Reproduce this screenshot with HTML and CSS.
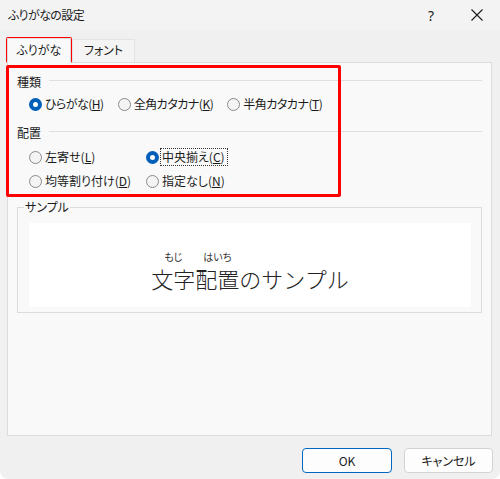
FILE: index.html
```html
<!DOCTYPE html>
<html lang="ja">
<head>
<meta charset="utf-8">
<title>ふりがなの設定</title>
<link rel="stylesheet" href="styles.css">
</head>
<body>
<div class="window">
  <div class="titlebar">
    <span class="title">ふりがなの設定</span>
    <span class="tbtn help">?</span>
    <span class="tbtn close">
      <svg width="12" height="12" viewBox="0 0 12 12"><path d="M0.5 0.5 L11.5 11.5 M11.5 0.5 L0.5 11.5" stroke="#1b1b1b" stroke-width="1.1" fill="none"/></svg>
    </span>
  </div>

  <div class="tabs">
    <div class="tab active">ふりがな</div>
    <div class="tab">フォント</div>
  </div>

  <div class="panel">
    <div class="ghead">種類</div>
    <div class="row row1">
      <label class="opt"><span class="radio on"></span><span>ひらがな(<u>H</u>)</span></label>
      <label class="opt"><span class="radio"></span><span>全角カタカナ(<u>K</u>)</span></label>
      <label class="opt"><span class="radio"></span><span>半角カタカナ(<u>T</u>)</span></label>
    </div>

    <div class="ghead g2">配置</div>
    <div class="grid">
      <label class="opt"><span class="radio"></span><span>左寄せ(<u>L</u>)</span></label>
      <label class="opt"><span class="radio on"></span><span class="focus">中央揃え(<u>C</u>)</span></label>
      <label class="opt"><span class="radio"></span><span>均等割り付け(<u>D</u>)</span></label>
      <label class="opt"><span class="radio"></span><span>指定なし(<u>N</u>)</span></label>
    </div>

    <fieldset class="samplebox">
      <legend>サンプル</legend>
      <div class="preview">
        <div class="sample"><ruby>文字<rt>もじ</rt></ruby><ruby>配置<rt>はいち</rt></ruby>のサンプル</div>
      </div>
    </fieldset>
  </div>

  <div class="footer">
    <button class="btn ok">OK</button>
    <button class="btn">キャンセル</button>
  </div>

  <div class="mark mark-tab"></div>
  <div class="mark mark-sec"></div>
</div>
</body>
</html>
```

FILE: styles.css
```css
html {
  margin: 0;
  background: #ffffff;
}
body {
  margin: 0;
  font-family: "Noto Sans CJK JP", "Noto Sans", sans-serif;
  font-size: 12px;
  color: #1b1b1b;
}
.window {
  position: relative;
  width: 500px;
  height: 479px;
  background: #f0f0f0;
  border-radius: 0 0 8px 8px;
  overflow: hidden;
  font-feature-settings: "palt";
}
.titlebar {
  height: 30px;
  display: flex;
  align-items: center;
  padding-left: 8px;
  background: #f3f3f3;
}
.title {
  line-height: 16px;
  margin-top: -1px;
  letter-spacing: -0.6px;
}
.tbtn {
  width: 46px;
  height: 30px;
  display: flex;
  align-items: center;
  justify-content: center;
}
.help {
  margin-left: auto;
  font-size: 14px;
  font-family: "Noto Sans", sans-serif;
}
.close svg {
  display: block;
}
.tabs {
  height: 32px;
  display: flex;
  align-items: flex-end;
  padding-left: 7px;
}
.tab {
  box-sizing: border-box;
  height: 23px;
  line-height: 20px;
  text-align: center;
  background: #f4f4f4;
  border: 1px solid #e3e3e3;
  border-bottom: none;
  width: 63px;
  margin-left: 1px;
}
.tab.active {
  width: 64px;
  height: 25px;
  margin-left: 0;
  margin-bottom: -1px;
  line-height: 22px;
  background: #f9f9f9;
  border-color: #dcdcdc;
  position: relative;
  z-index: 1;
}
.panel {
  box-sizing: border-box;
  margin-left: 7px;
  width: 485px;
  height: 374px;
  background: #f9f9f9;
  border: 1px solid #dcdcdc;
  padding: 11px 9px 0 9px;
}
.ghead {
  display: flex;
  height: 16px;
  line-height: 16px;
}
.ghead::after {
  content: "";
  flex: 1;
  height: 1px;
  background: #dfdfdf;
  margin: 6px 0 0 8px;
}
.g2 {
  margin-top: 9px;
}
.row {
  display: flex;
  height: 24px;
  align-items: center;
  padding-left: 12px;
  margin-top: 2px;
}
.row1 .opt {
  margin-right: 14px;
}
.row1 .opt span:last-child {
  letter-spacing: -0.5px;
}
.grid {
  display: grid;
  grid-template-columns: 117px auto;
  grid-auto-rows: 24px;
  padding-left: 12px;
  margin-top: 4px;
  align-items: center;
}
.opt {
  display: flex;
  align-items: center;
  line-height: 16px;
}
.radio {
  box-sizing: border-box;
  width: 13px;
  height: 13px;
  border-radius: 50%;
  border: 1px solid #8a8a8a;
  background: #f4f4f4;
  margin-right: 3px;
  flex: none;
}
.radio.on {
  border: 4px solid #005fb8;
  background: #ffffff;
}
.focus {
  outline: 1px dotted #333333;
  padding: 0 2px 0 1px;
  margin-left: -1px;
}
.samplebox {
  margin: 7px 0 0 0;
  min-width: 0;
  border: 1px solid #dcdcdc;
  padding: 0 10px 5px 11px;
}
.samplebox legend {
  margin-left: -5px;
  padding: 0 1px;
  line-height: 14px;
}
.preview {
  margin-top: 9px;
  height: 84px;
  background: #ffffff;
  box-sizing: border-box;
  padding-top: 34px;
  text-align: center;
}
.sample {
  font-size: 22px;
  line-height: 22px;
  font-weight: 300;
  font-feature-settings: normal;
  color: #222222;
}
.sample ruby {
  ruby-align: center;
}
.sample rt {
  ruby-align: center;
  font-size: 10px;
  line-height: 11px;
  font-weight: 400;
  font-feature-settings: "palt";
  color: #333333;
  position: relative;
  top: -5px;
}
.footer {
  display: flex;
  justify-content: flex-end;
  gap: 12px;
  padding: 12px 7px 0 0;
}
.btn {
  box-sizing: border-box;
  height: 25px;
  width: 89px;
  border: 1px solid #d3d3d3;
  border-radius: 4px;
  background: #fdfdfd;
  font-family: "Noto Sans CJK JP", "Noto Sans", sans-serif;
  font-size: 12px;
  font-feature-settings: "palt";
  color: #1b1b1b;
  padding: 0;
}
.btn.ok {
  width: 90px;
  border-color: #0067c0;
}
.mark {
  position: absolute;
  border: 3px solid #ff0000;
  border-radius: 2px;
  box-sizing: border-box;
  pointer-events: none;
}
.mark-tab {
  left: 6px;
  top: 37px;
  width: 66px;
  height: 26px;
}
.mark-sec {
  left: 6px;
  top: 65px;
  width: 335px;
  height: 132px;
}
```
